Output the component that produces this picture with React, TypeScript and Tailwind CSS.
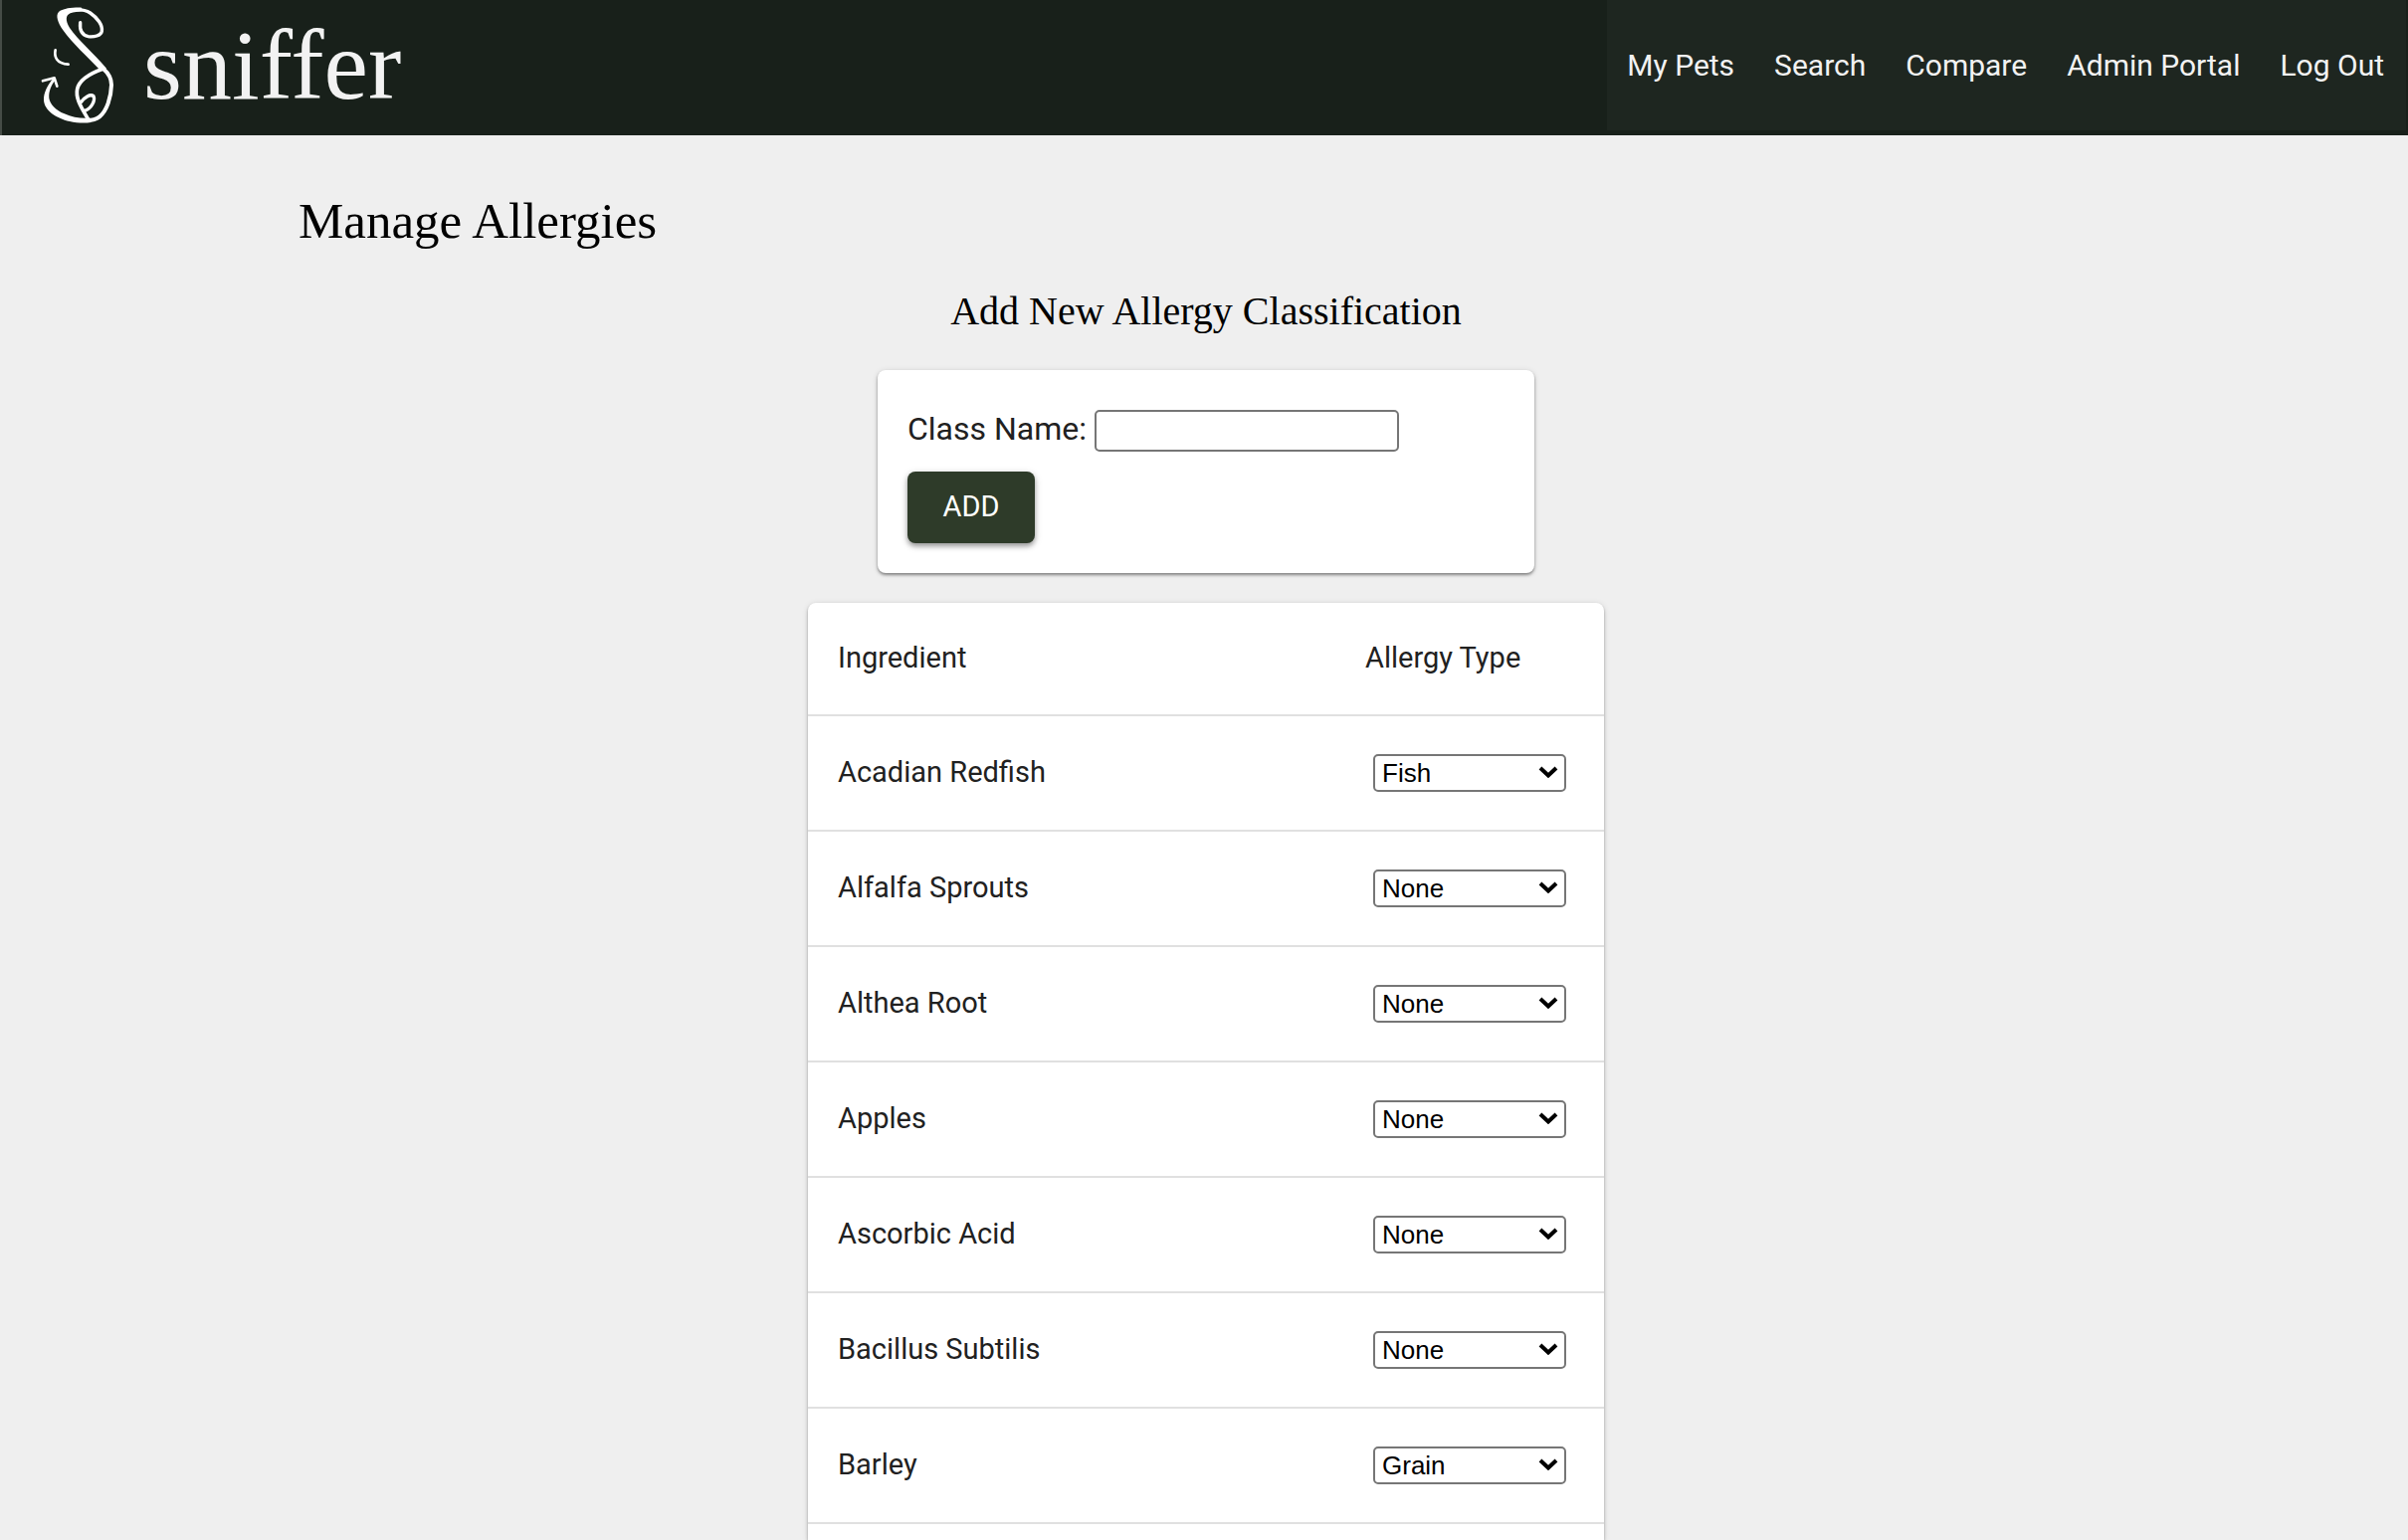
import React, { useState } from "react";

const NAV_LINKS = ["My Pets", "Search", "Compare", "Admin Portal", "Log Out"];

const ALLERGY_TYPES = ["None", "Fish", "Grain"];

const INGREDIENTS = [
  { name: "Acadian Redfish", type: "Fish" },
  { name: "Alfalfa Sprouts", type: "None" },
  { name: "Althea Root", type: "None" },
  { name: "Apples", type: "None" },
  { name: "Ascorbic Acid", type: "None" },
  { name: "Bacillus Subtilis", type: "None" },
  { name: "Barley", type: "Grain" },
];

function Logo() {
  return (
    <svg
      viewBox="0 0 360 390"
      className="h-[130px] w-[120px] shrink-0"
      fill="none"
      stroke="#fff"
      strokeLinecap="round"
      strokeLinejoin="round"
      aria-hidden="true"
    >
      {/* curl and back of the head */}
      <path
        strokeWidth="10"
        d="M182 68 C180 88 186 106 206 110 C224 112 244 108 247 94 C250 76 234 54 212 39 C194 27 164 28 140 32"
      />
      <path
        fill="#fff"
        stroke="none"
        d="M186 23 C160 22 128 26 117 36 C107 46 114 68 130 91 C158 130 204 172 244 214 L261 206 C222 160 174 120 150 84 C136 62 138 46 152 40 C162 36 176 36 188 34 Z"
      />
      <path strokeWidth="12" d="M252 208 C268 222 276 240 276 256 C275 294 262 334 240 352 C228 361 214 363 204 363" />
      {/* chin sweeping up to the mouth */}
      <path
        fill="#fff"
        stroke="none"
        d="M101 236 C84 254 71 280 72 302 C74 334 110 356 150 366 C172 371 196 372 214 369 L212 356 C184 358 158 354 134 343 C108 332 91 314 88 296 C86 276 95 256 107 241 Z"
      />
      <path strokeWidth="8" d="M69 244 L104 235 L112 260" />
      {/* eye */}
      <path strokeWidth="8" d="M107 151 C103 171 110 192 146 194" />
      {/* nose */}
      <path
        strokeWidth="11"
        d="M250 208 C222 218 180 238 173 268 C167 296 184 322 206 360"
      />
      <path strokeWidth="10" d="M184 308 C194 294 212 282 222 290 C228 302 216 328 195 334" />
    </svg>
  );
}

function AllergySelect({ name, initial }: { name: string; initial: string }) {
  const [value, setValue] = useState(initial);
  return (
    <div className="relative mx-auto w-[194px]">
      <select
        aria-label={`Allergy type for ${name}`}
        value={value}
        onChange={(e) => setValue(e.target.value)}
        className="block h-[38px] w-full appearance-none rounded-[5px] border-2 border-[#767676] bg-white pl-[7px] font-['Liberation_Sans',Arial,sans-serif] text-[26px] leading-[34px] text-black"
      >
        {ALLERGY_TYPES.map((t) => (
          <option key={t}>{t}</option>
        ))}
      </select>
      <svg
        viewBox="0 0 20 12"
        className="pointer-events-none absolute top-3 right-2 h-3 w-5"
        fill="none"
        stroke="#000"
        strokeWidth="4"
        aria-hidden="true"
      >
        <path d="M2 2 L10 9.5 L18 2" />
      </svg>
    </div>
  );
}

export default function App() {
  const [className, setClassName] = useState("");
  return (
    <div className="flex min-h-screen flex-col bg-[#efefef] font-[Roboto,sans-serif] text-[#212121]">
      <header className="flex h-[136px] items-start justify-between border-l-2 border-[#454c46] bg-[#18201a] text-[#f2f2f2]">
        <a href="#" className="flex items-start gap-1 pl-[18px]">
          <Logo />
          <span className="font-['Liberation_Serif',serif] text-[100px] leading-[132px]">sniffer</span>
        </a>
        <nav className="mr-0.5 flex h-[131px] items-center gap-10 bg-[#1e2620] pr-[22px] pl-5 text-[30px]">
          {NAV_LINKS.map((l) => (
            <a key={l} href="#">
              {l}
            </a>
          ))}
        </nav>
      </header>

      <main className="flex flex-1 flex-col items-center pl-1">
        <h1 className="mt-14 w-full px-[296px] font-['Liberation_Serif',serif] text-[51px] leading-[60px] text-black">
          Manage Allergies
        </h1>
        <h2 className="mt-9 font-['Liberation_Serif',serif] text-[40px] leading-[50px] text-black">
          Add New Allergy Classification
        </h2>

        <form
          onSubmit={(e) => e.preventDefault()}
          className="mt-[34px] w-full max-w-[660px] rounded-lg bg-white p-[30px] pt-9 shadow-[0_2px_3px_rgba(0,0,0,0.4),0_1px_6px_rgba(0,0,0,0.12)]"
        >
          <div className="flex items-end gap-2">
            <label htmlFor="class-name" className="self-start text-[32px] leading-[46px]">
              Class Name:
            </label>
            <input
              id="class-name"
              value={className}
              onChange={(e) => setClassName(e.target.value)}
              className="h-[42px] w-[306px] rounded-[5px] border-2 border-[#767676] bg-white px-1 text-[26px]"
            />
          </div>
          <button
            type="submit"
            className="mt-5 block h-[72px] w-32 rounded-lg bg-[#2e3b29] text-[29px] text-white shadow-[0_3px_5px_rgba(0,0,0,0.35),0_2px_10px_rgba(0,0,0,0.12)]"
          >
            ADD
          </button>
        </form>

        <div className="mt-[30px] w-full max-w-[800px] flex-1 rounded-t-lg bg-white shadow-[0_2px_3px_rgba(0,0,0,0.3),0_1px_6px_rgba(0,0,0,0.12)]">
          <table className="w-full border-collapse text-left text-[29px]">
            <thead>
              <tr className="h-[113px] border-b-2 border-[#e0e0e0]">
                <th scope="col" className="px-[30px] font-normal">
                  Ingredient
                </th>
                <th scope="col" className="w-[270px] px-[30px] font-normal">
                  Allergy Type
                </th>
              </tr>
            </thead>
            <tbody>
              {INGREDIENTS.map((row) => (
                <tr key={row.name} className="h-[116px] border-b-2 border-[#e0e0e0]">
                  <td className="px-[30px]">{row.name}</td>
                  <td className="px-[30px]">
                    <AllergySelect name={row.name} initial={row.type} />
                  </td>
                </tr>
              ))}
            </tbody>
          </table>
        </div>
      </main>
    </div>
  );
}
